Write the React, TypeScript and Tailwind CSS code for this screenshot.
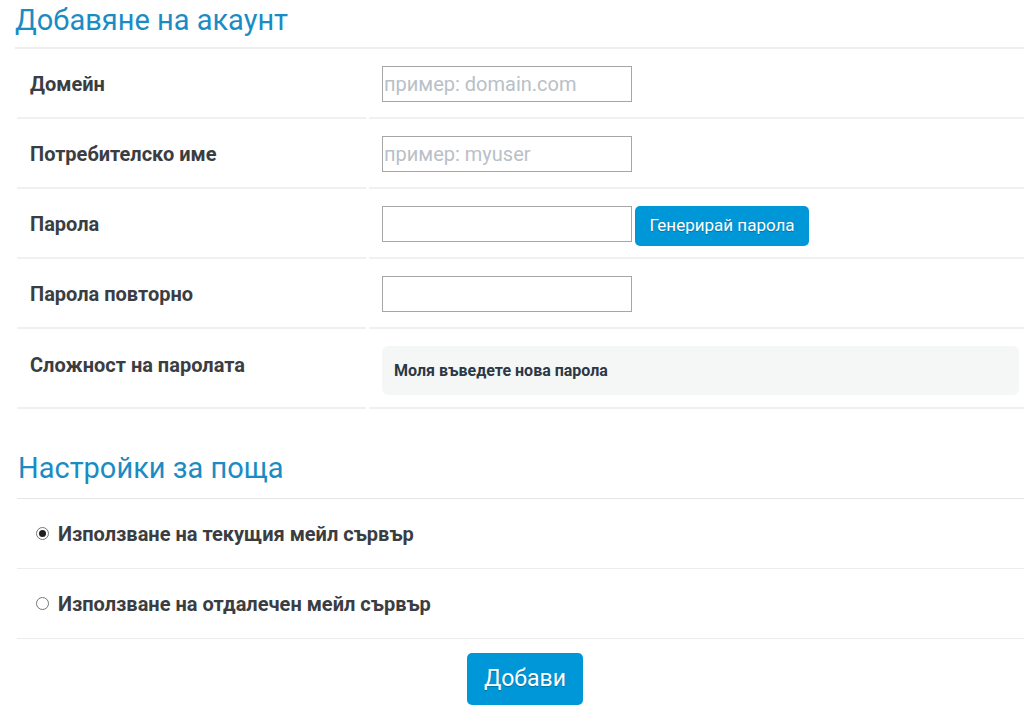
type Field = {
  label: string;
  placeholder?: string;
  withGenerate?: boolean;
};

const fields: Field[] = [
  { label: "Домейн", placeholder: "пример: domain.com" },
  { label: "Потребителско име", placeholder: "пример: myuser" },
  { label: "Парола", withGenerate: true },
  { label: "Парола повторно" },
];

function Radio({ checked }: { checked?: boolean }) {
  return (
    <span className="flex h-[13px] w-[13px] items-center justify-center rounded-full border border-[#767676] bg-white">
      {checked && <span className="h-[7px] w-[7px] rounded-full bg-[#1f1f1f]" />}
    </span>
  );
}

export default function App() {
  return (
    <div className="h-[710px] w-[1024px] overflow-hidden bg-white font-['Roboto',sans-serif] text-[#3a3d42]">
      <h2 className="ml-[15px] h-[47px] pt-[1px] text-[29px] leading-[38px] font-normal text-[#1a8cc4]">
        Добавяне на акаунт
      </h2>
      <div className="ml-[15px] border-b-2 border-[#eeeeee]" />

      <div className="ml-[17px]">
        {fields.map((field) => (
          <div key={field.label} className="flex h-[70px] gap-[3px]">
            <div className="w-[349px] border-b-2 border-[#f0f0f0] pl-[13px] pt-[22px] text-[20px] leading-[26px] font-bold">
              {field.label}
            </div>
            <div className="flex flex-1 items-start border-b-2 border-[#f0f0f0] pl-[13px] pt-[17px]">
              <input
                type="text"
                placeholder={field.placeholder}
                className="h-[36px] w-[250px] border border-[#a6a6a6] bg-white px-[1px] text-[20px] text-[#333] outline-none placeholder:text-[#b9c0c7]"
              />
              {field.withGenerate && (
                <button
                  type="button"
                  className="ml-[3px] h-[40px] w-[174px] rounded-[5px] bg-[#0097d9] text-[17px] text-white [text-shadow:0_1px_1px_rgba(0,0,0,0.25)]"
                >
                  Генерирай парола
                </button>
              )}
            </div>
          </div>
        ))}

        <div className="flex h-[80px] gap-[3px]">
          <div className="w-[349px] border-b-2 border-[#f0f0f0] pl-[13px] pt-[23px] text-[20px] leading-[26px] font-bold">
            Сложност на паролата
          </div>
          <div className="flex-1 border-b-2 border-[#f0f0f0] pl-[13px] pr-[5px] pt-[17px]">
            <div className="flex h-[49px] items-center rounded-[6px] bg-[#f5f7f7] pl-[12px] text-[16px] font-bold text-[#2b3845]">
              Моля въведете нова парола
            </div>
          </div>
        </div>
      </div>

      <h2 className="ml-[18px] mt-[40px] h-[49px] text-[29px] leading-[38px] font-normal text-[#1a8cc4]">
        Настройки за поща
      </h2>
      <div className="ml-[17px] border-b border-[#e6e6e6]" />

      <div className="ml-[17px]">
        <label className="flex h-[70px] items-center gap-[9px] border-b border-[#ececec] pl-[19px] text-[20px] font-bold">
          <Radio checked />
          Използване на текущия мейл сървър
        </label>
        <label className="flex h-[70px] items-center gap-[9px] border-b border-[#ececec] pl-[19px] text-[20px] font-bold">
          <Radio />
          Използване на отдалечен мейл сървър
        </label>
      </div>

      <div className="flex justify-center pl-[26px] pt-[14px]">
        <button
          type="button"
          className="h-[52px] w-[116px] rounded-[5px] bg-[#0097d9] text-[23px] text-white [text-shadow:0_1px_1px_rgba(0,0,0,0.25)]"
        >
          Добави
        </button>
      </div>
    </div>
  );
}
